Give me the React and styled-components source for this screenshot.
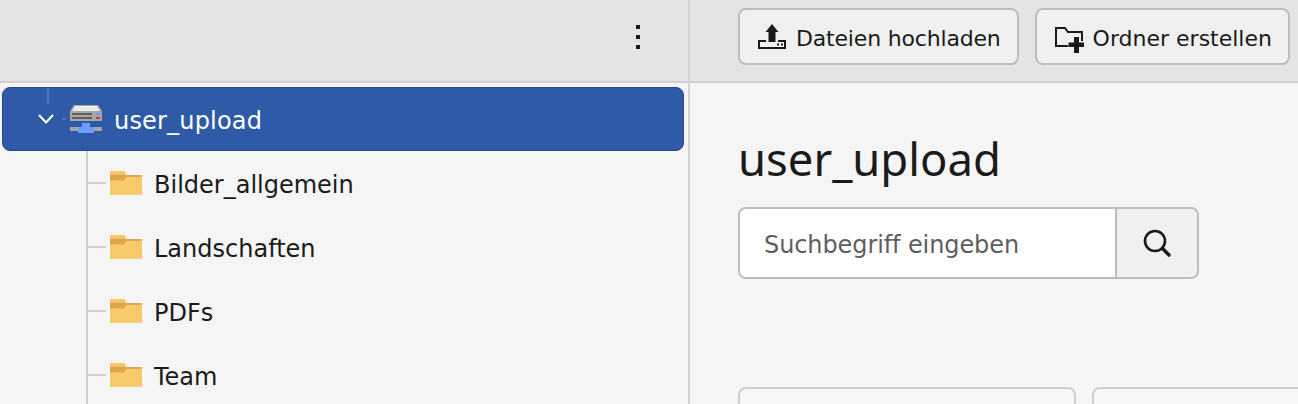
import React from 'react'
import styled, { createGlobalStyle } from 'styled-components'

const GlobalStyle = createGlobalStyle`
  html, body { margin: 0; padding: 0; background: #f5f5f5; }
  body { font-family: "DejaVu Sans", Verdana, sans-serif; color: #1a1a1a; }
`;

const Page = styled.div`display:grid;grid-template-columns:690px 1fr;height:404px;overflow:hidden;`;
const LeftPane = styled.div`border-right:2px solid #d4d4d4;overflow:hidden;`;
const RightPane = styled.div`overflow:hidden;`;

const Toolbar = styled.div`height:81px;box-sizing:content-box;background:#e4e4e4;border-bottom:2px solid #d0d0d0;display:flex;`;
const TreeToolbar = styled(Toolbar)`justify-content:flex-end;align-items:flex-start;padding:23px 36px 0 0;height:58px;`;
const ActionToolbar = styled(Toolbar)`gap:16px;padding:8px 0 0 48px;height:73px;`;

const MenuButton = styled.button`border:none;background:none;padding:0;width:28px;height:28px;display:flex;align-items:center;justify-content:center;`;
const ActionButton = styled.button`
  height:57px;box-sizing:border-box;display:flex;align-items:center;gap:${p => p.$gap}px;
  padding:0 16px 0 18px;background:#f0f0f0;border:2px solid #bdbdbd;border-radius:8px;
  font:22px "DejaVu Sans", Verdana, sans-serif;color:#1a1a1a;white-space:nowrap;
  letter-spacing:${p => p.$tracking || 0}px;
`;
const ButtonLabel = styled.span`padding-top:4px;`;
const FolderPlusSvg = styled.svg`margin-top:6px;flex:none;`;

const Tree = styled.div`padding:4px 4px 0 2px;`;
const RootRow = styled.div`
  position:relative;height:64px;box-sizing:border-box;display:flex;align-items:center;
  background:#2f5aa8;border:1px solid #26498f;border-radius:8px;color:#fff;
  font-size:24px;padding-left:35px;
  &::before{content:"";position:absolute;left:44px;top:0;width:2px;height:16px;background:#4f76bd;}
`;
const RootStub = styled.span`width:4px;height:2px;background:#4f76bd;margin:0 4px 0 8px;`;
const RootLabel = styled.span`margin-left:12px;padding-top:4px;letter-spacing:.18px;`;
const Children = styled.div`margin-left:84px;border-left:2px solid #d0d0d0;`;
const ChildRow = styled.div`height:64px;display:flex;align-items:center;font-size:24px;color:#1a1a1a;`;
const Stub = styled.span`width:18px;height:2px;background:#d0d0d0;margin-right:4px;`;
const FolderLabel = styled.span`margin-left:12px;padding-top:4px;`;

const Content = styled.div`padding:0 0 0 48px;`;
const Title = styled.h1`margin:0;padding-top:44px;font:400 45.4px/62px "Noto Sans", sans-serif;color:#1a1a1a;`;
const SearchBar = styled.form`display:flex;width:461px;height:72px;margin-top:18px;box-sizing:border-box;border:2px solid #bdbdbd;border-radius:8px;overflow:hidden;`;
const SearchInput = styled.input`
  flex:1;min-width:0;border:none;border-right:2px solid #bdbdbd;background:#fff;outline:none;padding:4px 24px 0;
  font:24px "DejaVu Sans", Verdana, sans-serif;letter-spacing:-.1px;
  &::placeholder{color:#5e5e5e;opacity:1;}
`;
const SearchButton = styled.button`width:80px;border:none;background:#f0f0f0;padding:0;display:flex;align-items:center;justify-content:center;`;
const Cards = styled.div`display:flex;gap:16px;margin-top:108px;`;
const Card = styled.div`width:338px;height:60px;box-sizing:border-box;background:#f7f7f7;border:2px solid #cfcfcf;border-radius:8px;flex:none;`;

const KebabIcon = () => (
  <svg width="4" height="24" viewBox="0 0 4 24"><path d="M0 0h4v4H0zM0 10h4v4H0zM0 20h4v4H0z" fill="#1a1a1a" /></svg>
);

const UploadIcon = () => (
  <svg width="28" height="25" viewBox="0 0 28 25" fill="none">
    <path d="M8 17H1v7h26v-7h-7" stroke="#1a1a1a" strokeWidth="2" />
    <path d="M14 0l6.500 8H17.500v10h-7V8H7.500z" fill="#1a1a1a" />
    <path d="M19 19.500h2V21.500h-2zM23 19.500h2V21.500h-2z" fill="#1a1a1a" />
  </svg>
);

const FolderPlusIcon = () => (
  <FolderPlusSvg width="29" height="26" viewBox="0 0 29 26" fill="none">
    <path d="M13 19H1V1h9l3 4h14v9" stroke="#1a1a1a" strokeWidth="2" />
    <path d="M19 10h5v5.500h5V20h-5v6h-5v-6h-5.500v-4.500H19z" fill="#1a1a1a" />
  </FolderPlusSvg>
);

const SearchIcon = () => (
  <svg width="28" height="28" viewBox="0 0 28 28" fill="none" stroke="#1a1a1a">
    <circle cx="12" cy="12" r="10" strokeWidth="2.600" />
    <path d="M19.500 19.500L26 26" strokeWidth="3.400" strokeLinecap="round" />
  </svg>
);

const Chevron = () => (
  <svg width="16" height="10" viewBox="0 0 16 10" fill="none"><path d="M1 1l7 7.500L15 1" stroke="#fff" strokeWidth="2" /></svg>
);

const ServerIcon = () => (
  <svg width="32" height="28" viewBox="0 0 32 28">
    <path d="M0 6l4-6h24l4 6v10H0z" fill="#a6a6a6" />
    <path d="M2 6l3-5h22l3 5z" fill="#ececec" />
    <path d="M2 8h20v2H2zM2 12h20v2H2z" fill="#5f5f5f" />
    <path d="M26 8h4v2h-4z" fill="#6d9eff" />
    <path d="M26 12h4v2h-4z" fill="#d0392f" />
    <path d="M0 22h32v4H0z" fill="#a6a6a6" />
    <path d="M12 18h8v4h4v6H8v-6h4z" fill="#6d9eff" />
  </svg>
);

const FolderIcon = () => (
  <svg width="32" height="24" viewBox="0 0 32 24">
    <path d="M0 0h14l2 2.500V4h16v20H0z" fill="#f9ca6a" />
    <path d="M0 3.500h14l2 0.500h16v2H16l-2 3.500H0z" fill="#dfa650" />
  </svg>
);

const folders = ['Bilder_allgemein', 'Landschaften', 'PDFs', 'Team'];

export default function App() {
  return (
    <>
      <GlobalStyle />
      <Page>
        <LeftPane>
          <TreeToolbar>
            <MenuButton><KebabIcon /></MenuButton>
          </TreeToolbar>
          <Tree>
            <RootRow>
              <Chevron />
              <RootStub />
              <ServerIcon />
              <RootLabel>user_upload</RootLabel>
            </RootRow>
            <Children>
              {folders.map(name => (
                <ChildRow key={name}>
                  <Stub />
                  <FolderIcon />
                  <FolderLabel>{name}</FolderLabel>
                </ChildRow>
              ))}
            </Children>
          </Tree>
        </LeftPane>
        <RightPane>
          <ActionToolbar>
            <ActionButton $gap={10} $tracking={-0.18}><UploadIcon /><ButtonLabel>Dateien hochladen</ButtonLabel></ActionButton>
            <ActionButton $gap={9}><FolderPlusIcon /><ButtonLabel>Ordner erstellen</ButtonLabel></ActionButton>
          </ActionToolbar>
          <Content>
            <Title>user_upload</Title>
            <SearchBar>
              <SearchInput placeholder="Suchbegriff eingeben" />
              <SearchButton type="button"><SearchIcon /></SearchButton>
            </SearchBar>
            <Cards>
              <Card />
              <Card />
            </Cards>
          </Content>
        </RightPane>
      </Page>
    </>
  )
}
